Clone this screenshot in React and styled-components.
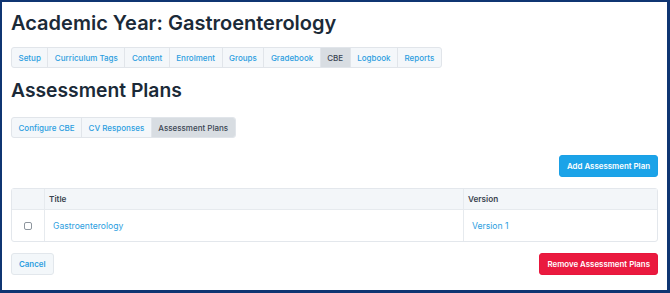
import React from "react";
import styled, { createGlobalStyle } from "styled-components";

const Global = createGlobalStyle`
  html, body {
    margin: 0;
    padding: 0;
    background: #ffffff;
  }
  * { box-sizing: border-box; }
`;

const Frame = styled.div`
  width: 670px;
  height: 293px;
  border-style: solid;
  border-color: #0f3572;
  border-width: 2px 3px 3px 2px;
  padding: 7px 9px 0 9px;
  font-family: Inter, "Noto Sans", sans-serif;
  display: flex;
  flex-direction: column;
  overflow: hidden;
`;

const Title = styled.h1`
  margin: 0;
  font-size: 20px;
  line-height: 28px;
  font-weight: 600;
  color: #1b2a38;
`;

const Heading = styled.h2`
  margin: 9px 0 0 0;
  font-size: 19.3px;
  line-height: 26px;
  font-weight: 600;
  color: #1b2a38;
`;

const TabBar = styled.nav`
  display: flex;
  align-self: flex-start;
  margin-top: ${(p) => p.$top}px;
  border: 1px solid #e1e5ea;
  border-radius: 3px;
  background: #f4f7fa;
  overflow: hidden;
`;

const Tab = styled.a`
  display: flex;
  align-items: center;
  height: 19px;
  padding: 0 6.5px;
  font-size: 8px;
  font-weight: 500;
  color: ${(p) => (p.$active ? "#3a4552" : "#2c9ee0")};
  background: ${(p) => (p.$active ? "#d8dde2" : "transparent")};
  border-left: ${(p) => (p.$first ? "none" : "1px solid #e1e5ea")};
  text-decoration: none;
  white-space: nowrap;
`;

const Toolbar = styled.div`
  display: flex;
  justify-content: ${(p) => p.$justify || "flex-end"};
  margin-top: ${(p) => p.$top}px;
`;

const Button = styled.button`
  height: 22px;
  padding: 0 7px;
  border-radius: 3px;
  font-family: inherit;
  font-size: 7.9px;
  font-weight: 600;
  cursor: pointer;
  border: 1px solid
    ${(p) =>
      p.$variant === "primary"
        ? "#1aa0e6"
        : p.$variant === "danger"
        ? "#e8163c"
        : "#e2e7ec"};
  background: ${(p) =>
    p.$variant === "primary"
      ? "#1ba3e8"
      : p.$variant === "danger"
      ? "#ea1a3f"
      : "#f3f7fa"};
  color: ${(p) => (p.$variant ? "#ffffff" : "#2c9ee0")};
`;

const Table = styled.table`
  margin-top: 11px;
  width: 100%;
  border-collapse: separate;
  border-spacing: 0;
  border: 1px solid #e3e7ec;
  border-radius: 3px;
  font-size: 8.2px;
`;

const Th = styled.th`
  text-align: left;
  height: 21px;
  padding: 0 4px;
  font-weight: 600;
  color: #3a4450;
  background: #f3f6f9;
  border-bottom: 1px solid #e6eaee;
  border-left: ${(p) => (p.$first ? "none" : "1px solid #e6eaee")};
  width: ${(p) => p.$w || "auto"};
`;

const Td = styled.td`
  height: 31px;
  padding: 0 ${(p) => (p.$first ? 0 : 8)}px;
  text-align: ${(p) => (p.$first ? "center" : "left")};
  border-left: ${(p) => (p.$first ? "none" : "1px solid #e6eaee")};
`;

const Link = styled.a`
  color: #2c9ee0;
  font-size: 8.6px;
  text-decoration: none;
`;

const Check = styled.span`
  display: inline-block;
  width: 8px;
  height: 8px;
  border: 1px solid #8e969e;
  border-radius: 2px;
  vertical-align: middle;
`;

const mainTabs = [
  "Setup",
  "Curriculum Tags",
  "Content",
  "Enrolment",
  "Groups",
  "Gradebook",
  "CBE",
  "Logbook",
  "Reports",
];

const subTabs = ["Configure CBE", "CV Responses", "Assessment Plans"];

export default function App() {
  return (
    <>
      <Global />
      <Frame>
        <Title>Academic Year: Gastroenterology</Title>
        <TabBar $top={10}>
          {mainTabs.map((t, i) => (
            <Tab key={t} $first={i === 0} $active={t === "CBE"}>
              {t}
            </Tab>
          ))}
        </TabBar>
        <Heading>Assessment Plans</Heading>
        <TabBar $top={14}>
          {subTabs.map((t, i) => (
            <Tab key={t} $first={i === 0} $active={t === "Assessment Plans"}>
              {t}
            </Tab>
          ))}
        </TabBar>
        <Toolbar $top={17}>
          <Button $variant="primary">Add Assessment Plan</Button>
        </Toolbar>
        <Table>
          <thead>
            <tr>
              <Th $first $w="32px"></Th>
              <Th>Title</Th>
              <Th $w="194px">Version</Th>
            </tr>
          </thead>
          <tbody>
            <tr>
              <Td $first>
                <Check />
              </Td>
              <Td>
                <Link>Gastroenterology</Link>
              </Td>
              <Td>
                <Link>Version 1</Link>
              </Td>
            </tr>
          </tbody>
        </Table>
        <Toolbar $top={11} $justify="space-between">
          <Button>Cancel</Button>
          <Button $variant="danger">Remove Assessment Plans</Button>
        </Toolbar>
      </Frame>
    </>
  );
}
